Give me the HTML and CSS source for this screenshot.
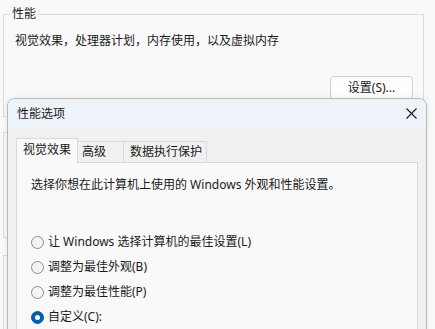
FILE: index.html
```html
<!DOCTYPE html>
<html lang="zh-CN">
<head>
<meta charset="utf-8">
<title>性能选项</title>
<link rel="stylesheet" href="styles.css">
</head>
<body>
<div class="page">
  <fieldset class="group group-perf">
    <legend>性能</legend>
    <p class="desc">视觉效果，处理器计划，内存使用，以及虚拟内存</p>
    <div class="btn-row"><button class="btn">设置(S)...</button></div>
  </fieldset>
  <div class="group group-2"></div>
  <div class="group group-3"></div>
</div>

<div class="dialog">
  <div class="titlebar">
    <span class="title">性能选项</span>
    <svg class="close" width="11" height="11" viewBox="0 0 11 11" aria-hidden="true">
      <path d="M0.5 0.5 L10.5 10.5 M10.5 0.5 L0.5 10.5" stroke="#1b1b1b" stroke-width="1.1" fill="none"/>
    </svg>
  </div>
  <div class="dlg-body">
    <div class="tabs">
      <div class="tab tab-visual active">视觉效果</div>
      <div class="tab tab-adv">高级</div>
      <div class="tab tab-dep">数据执行保护</div>
    </div>
    <div class="panel">
      <p class="intro">选择你想在此计算机上使用的 Windows 外观和性能设置。</p>
      <div class="options">
        <label class="opt"><span class="radio"></span>让 Windows 选择计算机的最佳设置(L)</label>
        <label class="opt"><span class="radio"></span>调整为最佳外观(B)</label>
        <label class="opt"><span class="radio"></span>调整为最佳性能(P)</label>
        <label class="opt"><span class="radio checked"></span>自定义(C):</label>
      </div>
    </div>
  </div>
</div>
</body>
</html>
```

FILE: styles.css
```css
html, body {
  margin: 0;
  padding: 0;
  width: 435px;
  height: 329px;
  overflow: hidden;
}
body {
  background: #f9f9f9;
  font-family: "Noto Sans", "Noto Sans CJK SC", sans-serif;
  font-size: 12px;
  line-height: 16px;
  color: #1a1a1a;
  position: relative;
}
.page {
  padding: 6px 0 0 3px;
  width: 421px;
}
.group {
  box-sizing: border-box;
  border: 1px solid #dcdcdc;
  margin: 0;
  width: 421px;
}
fieldset.group {
  padding: 0 10px 16px 11px;
  min-inline-size: 0;
}
fieldset.group legend {
  padding: 0 2px;
  margin-left: -5px;
  line-height: 16px;
}
.desc {
  margin: 11px 0 0 0;
}
.btn-row {
  display: flex;
  justify-content: flex-end;
  margin-top: 27px;
}
.btn {
  box-sizing: border-box;
  width: 83px;
  height: 24px;
  border: 1px solid #d0d0d0;
  border-radius: 4px;
  background: #fdfdfd;
  font: inherit;
  color: #1a1a1a;
  padding: 0;
}
.group-2 {
  margin-top: 15px;
  height: 106px;
}
.group-3 {
  margin-top: 17px;
  height: 100px;
}

.dialog {
  position: absolute;
  left: 7px;
  top: 98px;
  width: 420px;
  height: 260px;
  box-sizing: border-box;
  border: 1px solid #b8b8b8;
  border-radius: 8px 8px 0 0;
  background: #f0f0f0;
  overflow: hidden;
  box-shadow: 0 0 6px rgba(0,0,0,0.08);
}
.titlebar {
  height: 29px;
  background: #eef3f9;
  display: flex;
  align-items: center;
  justify-content: space-between;
  padding: 0 9px 0 9px;
}
.title {
  line-height: 16px;
}
.close {
  display: block;
  margin-right: 0;
}
.dlg-body {
  padding: 10px 8px 0 8px;
}
.tabs {
  display: flex;
  align-items: flex-end;
  height: 24px;
}
.tab {
  box-sizing: border-box;
  height: 21px;
  border: 1px solid #d9d9d9;
  border-bottom: none;
  background: #f0f0f0;
  padding-top: 2px;
  white-space: nowrap;
}
.tab + .tab {
  margin-left: -1px;
}
.tab.active {
  height: 25px;
  margin-bottom: -1px;
  background: #f9f9f9;
  padding-top: 3px;
  position: relative;
  z-index: 1;
}
.tab-visual { width: 62px; padding-left: 6px; }
.tab-adv { width: 47px; padding-left: 4px; }
.tab-dep { width: 84px; padding-left: 6px; }

.panel {
  box-sizing: border-box;
  width: 402px;
  height: 200px;
  border: 1px solid #d9d9d9;
  background: #f9f9f9;
  padding: 14px 0 0 14px;
}
.intro {
  margin: 0;
}
.options {
  margin-top: 41px;
  display: flex;
  flex-direction: column;
  gap: 9px;
}
.opt {
  display: flex;
  align-items: center;
  gap: 4px;
  height: 16px;
}
.radio {
  box-sizing: border-box;
  width: 13px;
  height: 13px;
  border-radius: 50%;
  border: 1px solid #8a8a8a;
  background: #f4f4f4;
  flex: none;
  display: flex;
  align-items: center;
  justify-content: center;
}
.radio.checked {
  background: #005fb8;
  border-color: #005fb8;
}
.radio.checked::after {
  content: "";
  width: 5px;
  height: 5px;
  border-radius: 50%;
  background: #ffffff;
}
```
